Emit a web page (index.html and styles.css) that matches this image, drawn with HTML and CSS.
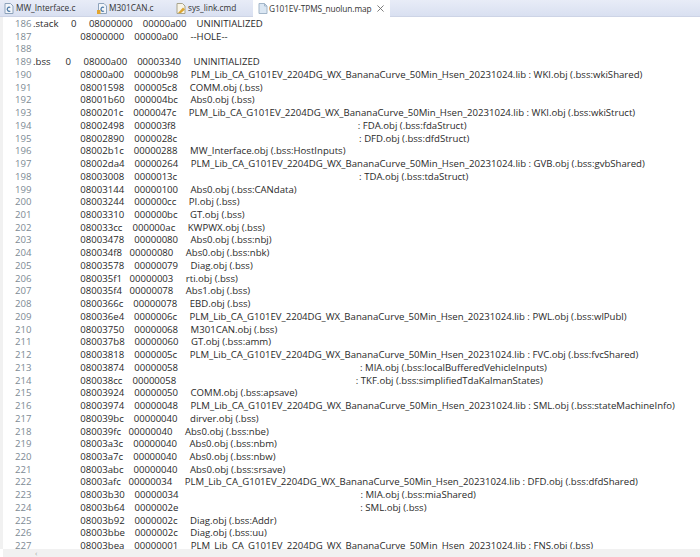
FILE: index.html
```html
<!DOCTYPE html>
<html lang="en">
<head>
<meta charset="utf-8">
<title>G101EV-TPMS_nuolun.map</title>
<link rel="stylesheet" href="styles.css">
</head>
<body>
<div class="tabs">
  <div class="tab t1"><svg class="ico" viewBox="0 0 10 11"><path d="M1 .5h5.500l2.500 2.500v7.500h-8z" fill="#f2f5fa" stroke="#8ea3bb"/><path d="M6.300 4.500a2 2 0 1 0 0 3.400" fill="none" stroke="#4a78a6" stroke-width="1.200"/></svg><span>MW_Interface.c</span></div>
  <div class="tab t2"><svg class="ico" viewBox="0 0 10 11"><path d="M1.500 .5h5.500l2.500 2.500v7.500h-8z" fill="#f2f5fa" stroke="#8ea3bb"/><path d="M7 4.500a2 2 0 1 0 0 3.400" fill="none" stroke="#4a78a6" stroke-width="1.200"/><path d="M0 7h3.500v4h-3.500z" fill="#e2a52f"/></svg><span>M301CAN.c</span></div>
  <div class="tab t3"><svg class="ico" viewBox="0 0 10 11"><path d="M1 .5h5.500l2.500 2.500v7.500h-8z" fill="#f8f4e6" stroke="#a9a48c"/><path d="M2 10l5-5.500 2 2-4 3.500z" fill="#dca531"/></svg><span>sys_link.cmd</span></div>
  <div class="tab active"><svg class="ico" viewBox="0 0 10 11"><path d="M1 .5h5.500l2.500 2.500v7.500h-8z" fill="#dbe7f3" stroke="#a3b6c9"/><path d="M6.500 .5v2.500h2.500" fill="none" stroke="#a3b6c9"/></svg><span class="active-name">G101EV-TPMS_nuolun.map</span><svg class="close" viewBox="0 0 8 8"><path d="M.5 .5l7 7M7.500 .5l-7 7" stroke="#6b6b6b" fill="none"/></svg></div>
</div>
<div class="editor">
<div class="row"><span class="n">186</span><span class="c">.stack     0     08000000    00000a00    UNINITIALIZED</span></div>
<div class="row"><span class="n">187</span><span class="c">                   08000000    00000a00     --HOLE--</span></div>
<div class="row"><span class="n">188</span><span class="c"></span></div>
<div class="row"><span class="n">189</span><span class="c">.bss      0     08000a00    00003340     UNINITIALIZED</span></div>
<div class="row"><span class="n">190</span><span class="c">                   08000a00    00000b98     PLM_Lib_CA_G101EV_2204DG_WX_BananaCurve_50Min_Hsen_20231024.lib : WKI.obj (.bss:wkiShared)</span></div>
<div class="row"><span class="n">191</span><span class="c">                   08001598    000005c8     COMM.obj (.bss)</span></div>
<div class="row"><span class="n">192</span><span class="c">                   08001b60    000004bc     Abs0.obj (.bss)</span></div>
<div class="row"><span class="n">193</span><span class="c">                   0800201c    0000047c     PLM_Lib_CA_G101EV_2204DG_WX_BananaCurve_50Min_Hsen_20231024.lib : WKI.obj (.bss:wkiStruct)</span></div>
<div class="row"><span class="n">194</span><span class="c">                   08002498    000003f8                                                                         : FDA.obj (.bss:fdaStruct)</span></div>
<div class="row"><span class="n">195</span><span class="c">                   08002890    0000028c                                                                         : DFD.obj (.bss:dfdStruct)</span></div>
<div class="row"><span class="n">196</span><span class="c">                   08002b1c    00000288     MW_Interface.obj (.bss:HostInputs)</span></div>
<div class="row"><span class="n">197</span><span class="c">                   08002da4    00000264     PLM_Lib_CA_G101EV_2204DG_WX_BananaCurve_50Min_Hsen_20231024.lib : GVB.obj (.bss:gvbShared)</span></div>
<div class="row"><span class="n">198</span><span class="c">                   08003008    0000013c                                                                         : TDA.obj (.bss:tdaStruct)</span></div>
<div class="row"><span class="n">199</span><span class="c">                   08003144    00000100     Abs0.obj (.bss:CANdata)</span></div>
<div class="row"><span class="n">200</span><span class="c">                   08003244    000000cc     PI.obj (.bss)</span></div>
<div class="row"><span class="n">201</span><span class="c">                   08003310    000000bc     GT.obj (.bss)</span></div>
<div class="row"><span class="n">202</span><span class="c">                   080033cc    000000ac     KWPWX.obj (.bss)</span></div>
<div class="row"><span class="n">203</span><span class="c">                   08003478    00000080     Abs0.obj (.bss:nbj)</span></div>
<div class="row"><span class="n">204</span><span class="c">                   080034f8   00000080     Abs0.obj (.bss:nbk)</span></div>
<div class="row"><span class="n">205</span><span class="c">                   08003578    00000079     Diag.obj (.bss)</span></div>
<div class="row"><span class="n">206</span><span class="c">                   080035f1   00000003     rti.obj (.bss)</span></div>
<div class="row"><span class="n">207</span><span class="c">                   080035f4   00000078     Abs1.obj (.bss)</span></div>
<div class="row"><span class="n">208</span><span class="c">                   0800366c    00000078     EBD.obj (.bss)</span></div>
<div class="row"><span class="n">209</span><span class="c">                   080036e4    0000006c     PLM_Lib_CA_G101EV_2204DG_WX_BananaCurve_50Min_Hsen_20231024.lib : PWL.obj (.bss:wlPubl)</span></div>
<div class="row"><span class="n">210</span><span class="c">                   08003750    00000068     M301CAN.obj (.bss)</span></div>
<div class="row"><span class="n">211</span><span class="c">                   080037b8    00000060     GT.obj (.bss:amm)</span></div>
<div class="row"><span class="n">212</span><span class="c">                   08003818    0000005c     PLM_Lib_CA_G101EV_2204DG_WX_BananaCurve_50Min_Hsen_20231024.lib : FVC.obj (.bss:fvcShared)</span></div>
<div class="row"><span class="n">213</span><span class="c">                   08003874    00000058                                                                         : MIA.obj (.bss:localBufferedVehicleInputs)</span></div>
<div class="row"><span class="n">214</span><span class="c">                   080038cc    00000058                                                                        : TKF.obj (.bss:simplifiedTdaKalmanStates)</span></div>
<div class="row"><span class="n">215</span><span class="c">                   08003924    00000050     COMM.obj (.bss:apsave)</span></div>
<div class="row"><span class="n">216</span><span class="c">                   08003974    00000048     PLM_Lib_CA_G101EV_2204DG_WX_BananaCurve_50Min_Hsen_20231024.lib : SML.obj (.bss:stateMachineInfo)</span></div>
<div class="row"><span class="n">217</span><span class="c">                   080039bc    00000040     dirver.obj (.bss)</span></div>
<div class="row"><span class="n">218</span><span class="c">                   080039fc   00000040     Abs0.obj (.bss:nbe)</span></div>
<div class="row"><span class="n">219</span><span class="c">                   08003a3c    00000040     Abs0.obj (.bss:nbm)</span></div>
<div class="row"><span class="n">220</span><span class="c">                   08003a7c    00000040     Abs0.obj (.bss:nbw)</span></div>
<div class="row"><span class="n">221</span><span class="c">                   08003abc    00000040     Abs0.obj (.bss:srsave)</span></div>
<div class="row"><span class="n">222</span><span class="c">                   08003afc   00000034     PLM_Lib_CA_G101EV_2204DG_WX_BananaCurve_50Min_Hsen_20231024.lib : DFD.obj (.bss:dfdShared)</span></div>
<div class="row"><span class="n">223</span><span class="c">                   08003b30    00000034                                                                         : MIA.obj (.bss:miaShared)</span></div>
<div class="row"><span class="n">224</span><span class="c">                   08003b64    0000002e                                                                         : SML.obj (.bss)</span></div>
<div class="row"><span class="n">225</span><span class="c">                   08003b92    0000002c     Diag.obj (.bss:Addr)</span></div>
<div class="row"><span class="n">226</span><span class="c">                   08003bbe    0000002c     Diag.obj (.bss:uu)</span></div>
<div class="row"><span class="n">227</span><span class="c">                   08003bea    00000001     PLM_Lib_CA_G101EV_2204DG_WX_BananaCurve_50Min_Hsen_20231024.lib : FNS.obj (.bss)</span></div>
</div>
<div class="hscroll"><span class="arrow">&lsaquo;</span></div>
</body>
</html>
```

FILE: styles.css
```css
html, body {
  margin: 0;
  padding: 0;
  height: 557px;
  overflow: hidden;
  background: #fff;
}
body {
  display: flex;
  flex-direction: column;
  font-family: "Open Sans", "Noto Sans", sans-serif;
  color: #2b2b2b;
}
.tabs {
  display: flex;
  flex: none;
  height: 16px;
  background: linear-gradient(#e8ecf7, #d9e0f1);
  border-bottom: 1px solid #cdd4e6;
  font-size: 8.3px;
  line-height: 16px;
}
.tab {
  display: flex;
  align-items: center;
  gap: 2px;
  box-sizing: border-box;
  white-space: nowrap;
  color: #333;
}
.t1 { width: 92px; padding-left: 4px; }
.t2 { width: 80px; padding-left: 5px; }
.t3 { width: 81px; padding-left: 4px; }
.active {
  width: 137px;
  height: 17px;
  padding-left: 5px;
  gap: 0;
  background: #fff;
}
.active-name { margin-left: 1px; letter-spacing: -0.1px; }
.ico { width: 10px; height: 11px; flex: none; }
.close { width: 7px; height: 7px; margin-left: 6px; flex: none; }
.editor {
  flex: 1;
  min-height: 0;
  overflow: hidden;
  padding-top: 1px;
  border-left: 3px solid #f1f1f1;
}
.row {
  display: flex;
  height: 12.74px;
  font-size: 9.6px;
  line-height: 12.74px;
  white-space: pre;
}
.n {
  flex: none;
  box-sizing: border-box;
  width: 30px;
  padding-left: 12px;
  color: #7d8a94;
}
.c { flex: none; color: #2a2a2a; }
.hscroll {
  flex: none;
  height: 8px;
  margin-left: 3px;
  background: #f1f1f1;
  color: #a8a8a8;
  font-size: 8px;
  line-height: 8px;
}
.arrow { margin-left: 32px; }
```
